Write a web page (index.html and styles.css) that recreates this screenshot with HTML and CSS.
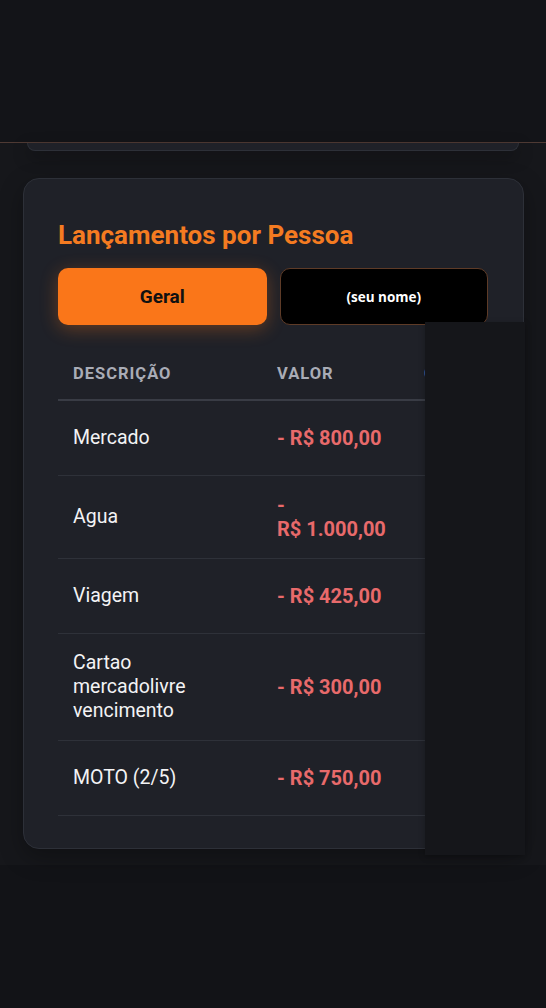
FILE: index.html
```html
<!DOCTYPE html>
<html lang="pt-BR">
<head>
<meta charset="utf-8">
<title>Lançamentos por Pessoa</title>
<link rel="stylesheet" href="styles.css">
</head>
<body>
<header class="topbar"></header>
<main class="page">
  <div class="card-stub"></div>
  <section class="card">
    <h2 class="title">Lançamentos por Pessoa</h2>
    <div class="tabs">
      <button class="tab tab-active">Geral</button>
      <button class="tab tab-dark">(seu nome)</button>
    </div>
    <table class="entries">
      <colgroup>
        <col class="c-desc">
        <col class="c-val">
        <col class="c-cat">
      </colgroup>
      <thead>
        <tr><th>Descrição</th><th>Valor</th><th>Cat.</th></tr>
      </thead>
      <tbody>
        <tr><td class="desc">Mercado</td><td class="val">- R$ 800,00</td><td><div class="slot"></div></td></tr>
        <tr><td class="desc">Agua</td><td class="val">- R$&nbsp;1.000,00</td><td><div class="slot"></div></td></tr>
        <tr><td class="desc">Viagem</td><td class="val">- R$ 425,00</td><td><div class="slot"></div></td></tr>
        <tr><td class="desc">Cartao mercadolivre vencimento</td><td class="val">- R$ 300,00</td><td><div class="slot"></div></td></tr>
        <tr><td class="desc">MOTO (2/5)</td><td class="val">- R$ 750,00</td><td><div class="slot"></div></td></tr>
      </tbody>
    </table>
  </section>
</main>
<div class="mask"></div>
</body>
</html>
```

FILE: styles.css
```css
* { box-sizing: border-box; }
html, body { margin: 0; padding: 0; }
body {
  background: #121317;
  font-family: Roboto, "Liberation Sans", Arial, sans-serif;
  color: #f1f1f3;
  min-height: 1008px;
  position: relative;
}
.topbar {
  height: 143px;
  background: #131418;
  border-bottom: 1px solid #4f3a34;
}
.page {
  background: #16171b;
  padding: 0 22px 16px 23px;
}
.card-stub {
  height: 8px;
  margin: 0 5px 0 4px;
  background: #1f2128;
  border: 1px solid #2d3038;
  border-top: none;
  border-radius: 0 0 12px 12px;
  box-shadow: 0 6px 16px rgba(0,0,0,0.35);
}
.card {
  margin-top: 27px;
  background: #1f2128;
  border: 1px solid #2d3038;
  border-radius: 16px;
  padding: 41px 35px 32px 34px;
  box-shadow: 0 8px 24px rgba(0,0,0,0.3);
}
.title {
  margin: 0;
  font-size: 26px;
  line-height: 30px;
  font-weight: 700;
  color: #f47b21;
}
.tabs {
  margin-top: 18px;
  display: grid;
  grid-template-columns: 1fr 1fr;
  gap: 13px;
}
.tab {
  height: 57px;
  border-radius: 10px;
  display: flex;
  align-items: center;
  justify-content: center;
  cursor: pointer;
  padding: 0;
}
.tab-active {
  background: #fa7619;
  border: none;
  color: #111;
  font-family: Roboto, "Liberation Sans", sans-serif;
  font-weight: 700;
  font-size: 19px;
  box-shadow: 0 4px 18px rgba(250,118,25,0.32);
}
.tab-dark {
  background: #000;
  border: 1px solid #5e3b27;
  color: #fff;
  font-family: "Open Sans", "DejaVu Sans", sans-serif;
  font-weight: 700;
  font-size: 13.5px;
}
.entries {
  margin-top: 17px;
  width: 100%;
  border-collapse: collapse;
  table-layout: fixed;
}
.c-desc { width: 204px; }
.c-val { width: 147px; }
.entries th {
  text-align: left;
  text-transform: uppercase;
  font-size: 16.5px;
  font-weight: 700;
  letter-spacing: 1px;
  color: #a9acb6;
  padding: 20px 15px 13px;
  line-height: 24px;
  border-bottom: 2px solid #393c45;
  white-space: nowrap;
}
.entries td {
  padding: 17px 15px;
  line-height: 24px;
  vertical-align: middle;
  border-bottom: 1px solid #2e3139;
}
.desc {
  font-size: 19.5px;
  color: #f3f3f5;
}
.val {
  font-size: 20px;
  font-weight: 700;
  color: #e86a6b;
}
.slot { height: 40px; }
.mask {
  position: absolute;
  left: 425px;
  top: 322px;
  width: 100px;
  height: 533px;
  background: #15161a;
  box-shadow: 0 2px 6px rgba(0,0,0,0.25);
}
```
